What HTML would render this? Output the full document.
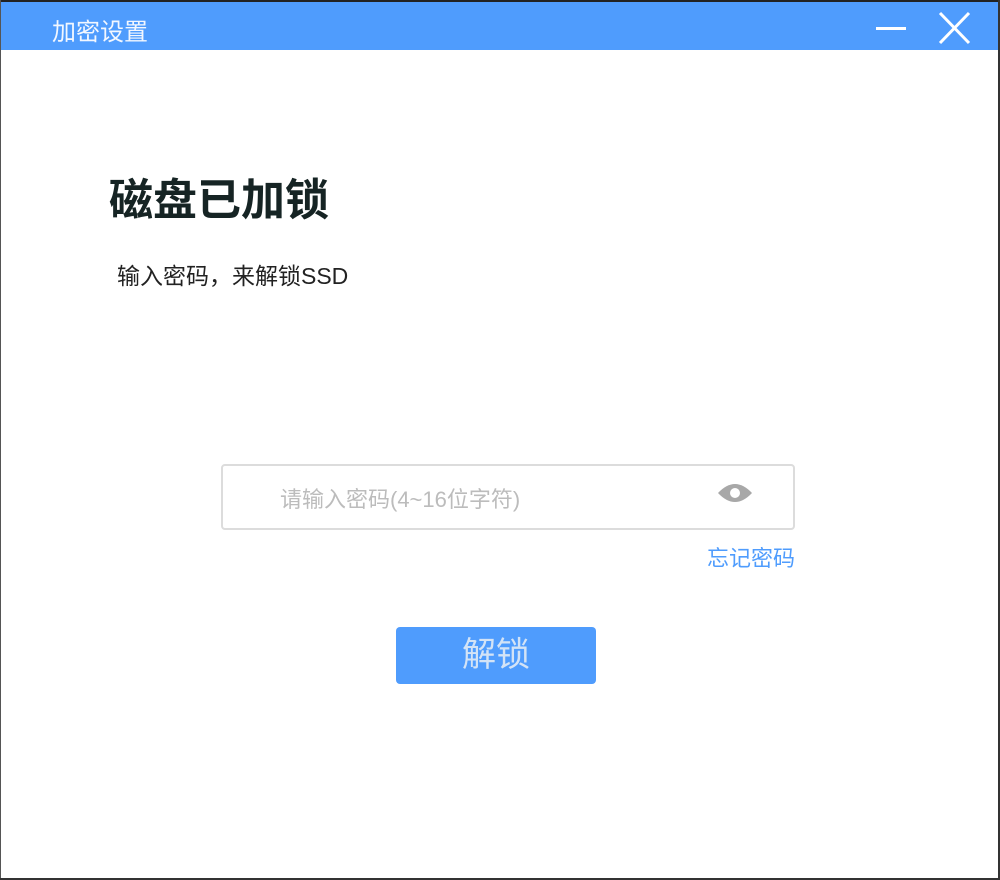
<!DOCTYPE html>
<html><head><meta charset="utf-8"><style>
*{margin:0;padding:0;box-sizing:border-box}
body{width:1000px;height:880px;background:#fff;position:relative;overflow:hidden;font-family:"Liberation Sans","Noto Sans CJK SC",sans-serif}
.bar{position:absolute;left:0;top:0;width:1000px;height:50px;background:#4f9cfd;border-top:2px solid #222}
.t{position:absolute;left:52px;top:10px;font-size:24px;color:#f2f7ff}
.min{position:absolute;left:876px;top:25px;width:30px;height:3px;background:#fff}
.x{position:absolute;left:936px;top:8px}
.abs{position:absolute}
</style></head><body>
<div class="bar"><div class="t">加密设置</div><div class="min"></div>
<svg class="x" width="36" height="36" viewBox="0 0 36 36"><path d="M4 3L33 33M33 3L4 33" stroke="#fff" stroke-width="3"/></svg></div>
<div class="abs" style="left:0;top:0;width:1px;height:880px;background:#555"></div>
<div class="abs" style="right:0;top:0;width:2px;height:880px;background:#333"></div>
<div class="abs" style="left:0;bottom:0;width:1000px;height:2px;background:#333"></div>
<div class="abs" style="left:109px;top:164px;font-size:44px;font-weight:bold;color:#162424">磁盘已加锁</div>
<div class="abs" style="left:117px;top:257px;font-size:23px;color:#222">输入密码，来解锁SSD</div>
<div class="abs" style="left:221px;top:464px;width:574px;height:66px;border:2px solid #dcdcdc;border-radius:4px"></div>
<div class="abs" style="left:280px;top:482px;font-size:22px;color:#bcbcbc">请输入密码(4~16位字符)</div>
<svg class="abs" style="left:716px;top:481px" width="38" height="24" viewBox="0 0 38 24"><path d="M2 12Q19 -6 36 12Q19 30 2 12Z" fill="#a8a8a8"/><circle cx="19" cy="12" r="5" fill="#fff"/></svg>
<div class="abs" style="left:707px;top:541px;font-size:22px;color:#4f9cfd">忘记密码</div>
<div class="abs" style="left:396px;top:627px;width:200px;height:57px;background:#4f9cfd;border-radius:4px;color:#d3e3f6;font-size:34px;text-align:center;line-height:57px">解锁</div>
</body></html>
